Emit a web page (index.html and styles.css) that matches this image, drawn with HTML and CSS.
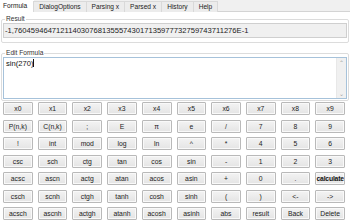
FILE: index.html
```html
<!DOCTYPE html>
<html>
<head>
<meta charset="utf-8">
<link rel="stylesheet" href="styles.css">
</head>
<body>
<div class="app">
  <div class="tabs">
    <div class="tab active">Formula</div>
    <div class="tab">DialogOptions</div>
    <div class="tab">Parsing x</div>
    <div class="tab">Parsed x</div>
    <div class="tab">History</div>
    <div class="tab">Help</div>
  </div>
  <div class="page">
    <fieldset class="group first">
      <legend>Result</legend>
      <div class="result">-1,76045946471211403076813555743017135977732759743711276E-1</div>
    </fieldset>
    <fieldset class="group second">
      <legend>Edit Formula</legend>
      <div class="editor">
        <div class="text">sin(270)<span class="caret"></span></div>
        <div class="scroll"><span class="arr">&#8963;</span><span class="arr">&#8964;</span></div>
      </div>
    </fieldset>
    <div class="keys">
      <button>x0</button><button>x1</button><button>x2</button><button>x3</button><button>x4</button><button>x5</button><button>x6</button><button>x7</button><button>x8</button><button>x9</button>
      <button>P(n,k)</button><button>C(n,k)</button><button>;</button><button>E</button><button>&#960;</button><button>e</button><button>/</button><button>7</button><button>8</button><button>9</button>
      <button>!</button><button>int</button><button>mod</button><button>log</button><button>ln</button><button>^</button><button>*</button><button>4</button><button>5</button><button>6</button>
      <button>csc</button><button>sch</button><button>ctg</button><button>tan</button><button>cos</button><button>sin</button><button>-</button><button>1</button><button>2</button><button>3</button>
      <button>acsc</button><button>ascn</button><button>actg</button><button>atan</button><button>acos</button><button>asin</button><button>+</button><button>0</button><button>.</button><button class="bold">calculate</button>
      <button>csch</button><button>scnh</button><button>ctgh</button><button>tanh</button><button>cosh</button><button>sinh</button><button>(</button><button>)</button><button>&lt;-</button><button>-&gt;</button>
      <button>acsch</button><button>ascnh</button><button>actgh</button><button>atanh</button><button>acosh</button><button>asinh</button><button>abs</button><button>result</button><button>Back</button><button>Delete</button>
    </div>
  </div>
</div>
</body>
</html>
```
FILE: styles.css
```css
* { box-sizing: border-box; }
html, body { margin: 0; padding: 0; }
body {
  width: 350px;
  height: 220px;
  overflow: hidden;
  background: #f0f0f0;
  font-family: "Liberation Sans", Arial, sans-serif;
  color: #1e1e1e;
}
.app { display: flex; flex-direction: column; height: 220px; }
.tabs {
  display: flex;
  height: 12px;
  border-bottom: 1px solid #d4d4d4;
  background: #f0f0f0;
}
.tab {
  font-size: 6.6px;
  line-height: 10px;
  height: 11px;
  padding: 0 5px;
  margin-top: 1px;
  border: 1px solid #d9d9d9;
  border-bottom: none;
  margin-left: -1px;
  background: #ececec;
  color: #222;
}
.tab.active {
  background: #fff;
  margin-top: 0;
  height: 12px;
  margin-left: 0;
  padding: 0 6px 0 2px;
  border-color: #fff;
}
.page {
  flex: 1;
  background: #fff;
  display: flex;
  flex-direction: column;
  padding: 3px 1px 0;
}
.group {
  margin: 0;
  border: 1px solid #dcdcdc;
  border-radius: 2px;
}
.group.first { padding: 0 1px 4px 1px; }
.group.second { padding: 0 1px 1px 1px; margin-top: 6px; }
.group legend {
  font-size: 6.6px;
  line-height: 8px;
  padding: 0 1px;
  margin-left: 2px;
  color: #333;
}
.result {
  height: 15px;
  border: 1px solid #cfcfcf;
  background: #f0f0f0;
  font-size: 7.6px;
  line-height: 13px;
  padding-left: 1px;
  white-space: nowrap;
  overflow: hidden;
  color: #222;
}
.editor {
  height: 42px;
  border: 1px solid #a6c2da;
  background: #fff;
  display: flex;
}
.text {
  flex: 1;
  font-size: 7.6px;
  line-height: 10px;
  padding: 1px 2px;
  color: #111;
}
.caret {
  display: inline-block;
  width: 1px;
  height: 8px;
  background: #111;
  vertical-align: -1px;
}
.scroll {
  width: 10px;
  background: #f0f0f0;
  border-left: 1px solid #e8e8e8;
  display: flex;
  flex-direction: column;
  justify-content: space-between;
  align-items: center;
  padding: 2px 0 1px;
}
.arr {
  font-size: 6px;
  line-height: 6px;
  color: #a0a0a0;
}
.keys {
  display: grid;
  grid-template-columns: repeat(10, 1fr);
  grid-auto-rows: 13px;
  column-gap: 5px;
  row-gap: 4.5px;
  padding: 1px 4px 0 2px;
}
.keys button {
  font-family: "Liberation Sans", Arial, sans-serif;
  font-size: 6.8px;
  color: #222;
  padding: 0;
  margin: 0;
  border: 1px solid #b9b9b9;
  border-radius: 1px;
  background: linear-gradient(#f3f3f3, #e4e4e4);
  box-shadow: inset 0 0 0 1px #f9f9f9;
  line-height: 11px;
  white-space: nowrap;
  overflow: hidden;
}
.keys button.bold { font-weight: bold; font-size: 6.8px; letter-spacing: -0.2px; color: #111; }
```
